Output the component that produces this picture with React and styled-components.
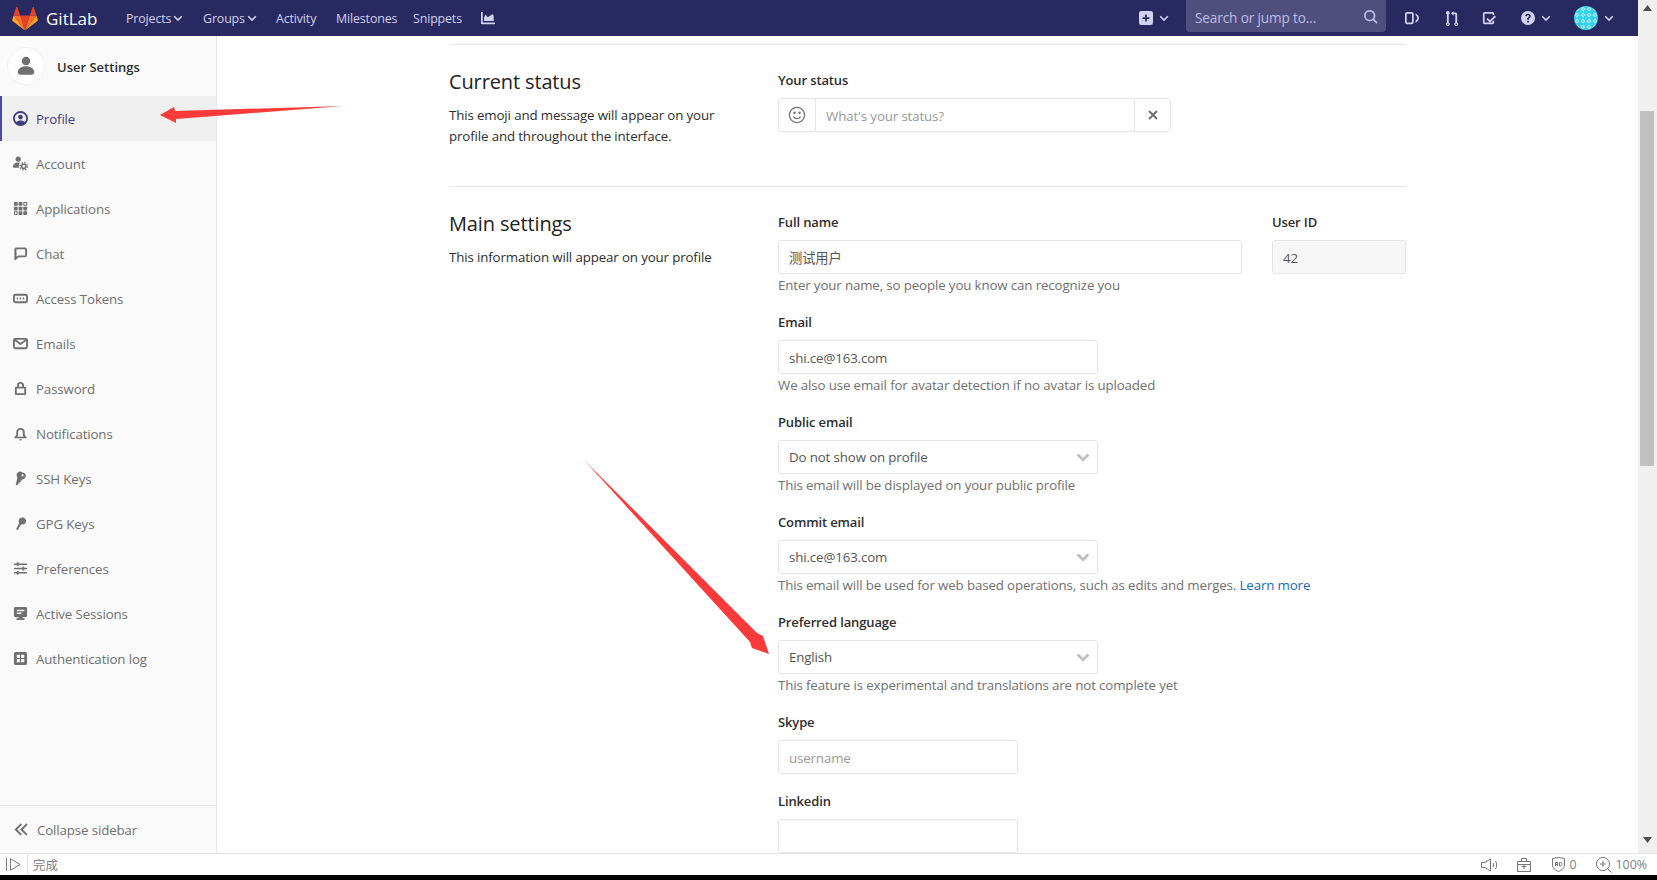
import React from "react";
import styled, {createGlobalStyle} from "styled-components";

const GlobalStyle = createGlobalStyle`
  html, body {
    margin: 0;
    height: 100%;
    overflow: hidden;
    background: #fff;
  }
  * { box-sizing: border-box; }
  body {
    font-family: "Open Sans", "Noto Sans CJK SC", sans-serif;
    font-size: 13.3px;
    letter-spacing: -0.13px;
    color: #2e2e2e;
  }
`;

const Page = styled.div`
  position: relative;
  width: 1657px;
  height: 880px;
  display: flex;
  flex-direction: column;
  overflow: hidden;
`;

const Window = styled.div`
  flex: 1;
  min-height: 0;
  display: flex;
`;

const Column = styled.div`
  flex: 1;
  min-width: 0;
  display: flex;
  flex-direction: column;
`;

/* top navbar */
const Navbar = styled.header`
  height: 36px;
  flex: none;
  display: flex;
  align-items: center;
  background: #292961;
  padding-right: 24px;
`;

const Logo = styled.a`
  display: flex;
  align-items: center;
  gap: 8px;
  margin-left: 12px;
  width: 114px;
  color: #fff;
  font-size: 17px;
  letter-spacing: 0;
`;

const NavLink = styled.a`
  display: flex;
  align-items: center;
  gap: 2px;
  width: ${props => props.$w}px;
  flex: none;
  color: #d1d1f0;
  font-size: 12.4px;
  font-weight: 500;
`;

const NavRight = styled.div`
  margin-left: auto;
  display: flex;
  align-items: center;
`;

const NavIcon = styled.span`
  display: flex;
  align-items: center;
  gap: 6px;
  margin-left: ${props => props.$ml || 0}px;
  color: #d1d1f0;
`;

const SearchBox = styled.div`
  width: 200px;
  height: 32px;
  margin: -4px 0 0 17px;
  padding: 2px 8px 0 9px;
  display: flex;
  align-items: center;
  justify-content: space-between;
  background: #4f4f7e;
  border-radius: 0 0 4px 4px;
  color: #bcbce6;
  font-size: 13.6px;
`;

/* page body */
const Body = styled.div`
  flex: 1;
  min-height: 0;
  display: flex;
`;

const Sidebar = styled.aside`
  width: 217px;
  flex: none;
  display: flex;
  flex-direction: column;
  background: #fafafa;
  border-right: 1px solid #e5e5e5;
`;

const SidebarHead = styled.div`
  height: 60px;
  display: flex;
  align-items: center;
  gap: 12px;
  padding-left: 7px;
  font-weight: 600;
  font-size: 13px;
  letter-spacing: 0;
`;

const HeadTitle = styled.span`
  padding-top: 1px;
`;

const HeadAvatar = styled.div`
  width: 38px;
  height: 38px;
  border-radius: 50%;
  background: #fff;
  border: 1px solid #f0f0f0;
  display: flex;
  align-items: center;
  justify-content: center;
`;

const SideItem = styled.a`
  height: 45px;
  display: flex;
  align-items: center;
  gap: 8px;
  padding-left: ${props => props.$active ? 11 : 13}px;
  color: ${props => props.$active ? "#3d3d82" : "#707070"};
  background: ${props => props.$active ? "#efefef" : "transparent"};
  border-left: ${props => props.$active ? "2px solid #4b4ba3" : "none"};
  font-weight: ${props => props.$active ? 500 : 400};
`;

const Collapse = styled.div`
  margin-top: auto;
  height: 48px;
  display: flex;
  align-items: center;
  gap: 8px;
  padding-left: 14px;
  border-top: 1px solid #e5e5e5;
  color: #707070;
`;

const Main = styled.main`
  flex: 1;
  min-width: 0;
  overflow: hidden;
  padding: 8px 0 0 232px;
`;

const Scrollbar = styled.div`
  width: 19px;
  flex: none;
  display: flex;
  flex-direction: column;
  align-items: center;
  padding-right: 1px;
  background: #f0f0f0;
`;

const Thumb = styled.div`
  width: 14px;
  height: 355px;
  margin-top: 100px;
  background: #c1c1c1;
`;

const ScrollArrow = styled.svg`
  width: 9px;
  height: 6px;
  flex: none;
  margin-top: ${props => props.$top || 0}px;
`;

const Rule = styled.hr`
  margin: 0;
  width: 957px;
  border: 0;
  border-top: 1px solid #e5e5e5;
`;

const Section = styled.section`
  display: grid;
  grid-template-columns: 329px 628px;
  width: 957px;
  padding-top: ${props => props.$pt}px;
  height: ${props => props.$h ? `${props.$h}px` : "auto"};
`;

const SectionInfo = styled.div`
  line-height: 21px;
`;

const SectionTitle = styled.h4`
  margin: -1px 0 10px;
  font-size: 20px;
  font-weight: 500;
  line-height: 26px;
  color: #222;
`;

const Field = styled.div`
  margin-bottom: 17px;
`;

const Label = styled.label`
  display: block;
  height: 20px;
  margin-bottom: 8px;
  line-height: 20px;
  font-weight: 600;
  font-size: 13px;
  color: #2e2e2e;
`;

const Input = styled.input`
  display: block;
  width: ${props => props.$w}px;
  height: 34px;
  padding: ${props => props.$cjk ? "0 10px" : "2px 10px 0"};
  border: 1px solid #e5e5e5;
  border-radius: 3px;
  background: ${props => props.$off ? "#f7f7f7" : "#fff"};
  font: inherit;
  letter-spacing: inherit;
  color: #555;
  outline: none;
  &::placeholder { color: #999; opacity: 1; }
`;

const SelectBox = styled.div`
  width: 320px;
  height: 34px;
  padding: 0 7px 0 10px;
  display: flex;
  align-items: center;
  justify-content: space-between;
  border: 1px solid #e5e5e5;
  border-radius: 3px;
  color: #555;
`;

const Help = styled.p`
  margin: 1px 0 0;
  line-height: 20px;
  color: #707070;
`;

const HelpLink = styled.a`
  color: #1b69b6;
`;

const NameRow = styled.div`
  display: flex;
  justify-content: space-between;
`;

const StatusGroup = styled.div`
  width: 393px;
  height: 34px;
  display: flex;
  border: 1px solid #e5e5e5;
  border-radius: 3px;
`;

const StatusAddon = styled.div`
  width: ${props => props.$w}px;
  flex: none;
  display: flex;
  align-items: center;
  justify-content: center;
  color: #707070;
  ${props => props.$left ? "border-right" : "border-left"}: 1px solid #e5e5e5;
`;

const StatusInput = styled.input`
  flex: 1;
  min-width: 0;
  border: 0;
  padding: 2px 10px 0;
  font: inherit;
  letter-spacing: inherit;
  outline: none;
  &::placeholder { color: #999; opacity: 1; }
`;

/* browser status strip */
const StatusBar = styled.footer`
  height: 22px;
  flex: none;
  display: flex;
  align-items: center;
  background: #fff;
  border-top: 1px solid #e3e3e3;
  color: #808080;
  font-size: 12.4px;
  letter-spacing: 0;
`;

const PlayBox = styled.div`
  width: 28px;
  height: 100%;
  display: flex;
  align-items: center;
  justify-content: center;
  border-right: 1px solid #e3e3e3;
  margin-right: 5px;
`;

const StatusRight = styled.div`
  margin-left: auto;
  padding-right: 10px;
  display: flex;
  align-items: center;
`;

const StatusItem = styled.span`
  display: flex;
  align-items: center;
  gap: 4px;
  margin-left: ${props => props.$ml}px;
`;

const BlackStrip = styled.div`
  height: 5px;
  flex: none;
  background: #000;
`;

/* the red marks drawn on top of the screenshot */
const Overlay = styled.svg`
  position: absolute;
  left: 0;
  top: 0;
  pointer-events: none;
`;

const Ico = ({children, s = 16, c = "currentColor"}) => (
  <svg width={s} height={s} viewBox="0 0 16 16" fill={c} style={{flex: "none"}}>{children}</svg>
);

const Chevron = ({s = 10, c = "currentColor", w = 1.6}) => (
  <svg width={s} height={s} viewBox="0 0 10 10" fill="none" stroke={c} strokeWidth={w} style={{flex: "none"}}>
    <path d="M1.2 3.2 5 7 8.8 3.2"/>
  </svg>
);

const GitlabLogo = () => (
  <svg width="26" height="25" viewBox="0 0 26 25" style={{flex: "none"}}>
    <path d="M13 24.5 17.8 9.6H8.2z" fill="#e24329"/>
    <path d="M13 24.5 8.2 9.6H1.5z" fill="#fc6d26"/>
    <path d="M1.5 9.6.2 13.9c-.1.4 0 .8.4 1.1L13 24.5z" fill="#fca326"/>
    <path d="M1.5 9.6h6.7L5.3 1c-.1-.5-.8-.5-1 0z" fill="#e24329"/>
    <path d="M13 24.5 17.8 9.6h6.7z" fill="#fc6d26"/>
    <path d="M24.500 9.600l1.300 4.300c.1.4 0 .8-.4 1.100L13 24.500z" fill="#fca326"/>
    <path d="M24.500 9.600h-6.700L20.700 1c.1-.5.8-.5 1 0z" fill="#e24329"/>
  </svg>
);

const Avatar = () => (
  <svg width="24" height="24" viewBox="0 0 24 24" style={{flex: "none"}}>
    <defs>
      <pattern id="ident" width="6" height="6" patternUnits="userSpaceOnUse">
        <rect width="6" height="6" fill="#2fd3ef"/>
        <rect x="1.200" y="1.200" width="3.600" height="3.600" fill="#b5eef8" transform="rotate(45 3 3)"/>
        <rect x="2.300" y="2.300" width="1.400" height="1.400" fill="#2fd3ef"/>
      </pattern>
    </defs>
    <circle cx="12" cy="12" r="12" fill="url(#ident)"/>
  </svg>
);

const icons = {
  profile: <><path fillRule="evenodd" d="M8 0a8 8 0 1 1 0 16A8 8 0 0 1 8 0zm0 2a6 6 0 0 0-4.600 9.850C4.400 10.700 6.100 10 8 10s3.600.7 4.600 1.850A6 6 0 0 0 8 2z"/><circle cx="8" cy="6.500" r="2.500"/></>,
  account: <>
    <circle cx="5.500" cy="3.200" r="2.800"/>
    <path d="M0 11.500C0 8.900 2.300 7 5.500 7c.6 0 1.200.1 1.700.2C6.300 8.400 6 10 6.400 12.500H1a1 1 0 0 1-1-1z"/>
    <circle cx="11.500" cy="11" r="2.300" fill="none" stroke="currentColor" strokeWidth="1.600"/>
    <circle cx="11.500" cy="11" r="3.900" fill="none" stroke="currentColor" strokeWidth="1.300" strokeDasharray="1.500 1.560"/>
  </>,
  apps: <><rect x="1" y="1" width="4" height="4" rx=".6"/><rect x="6" y="1" width="4" height="4" rx=".6"/><path fillRule="evenodd" d="M11.600 1h3a.6.6 0 0 1 .6.6v2.800a.6.6 0 0 1-.6.6h-3a.6.6 0 0 1-.6-.6V1.600a.6.6 0 0 1 .6-.6zm.5 1.100v1.800h2V2.100z"/><rect x="1" y="6" width="4" height="4" rx=".6"/><rect x="6" y="6" width="4" height="4" rx=".6"/><rect x="11" y="6" width="4" height="4" rx=".6"/><path fillRule="evenodd" d="M1.600 11h2.800a.6.6 0 0 1 .6.6v2.800a.6.6 0 0 1-.6.6H1.600a.6.6 0 0 1-.6-.6v-2.800a.6.6 0 0 1 .6-.6zm.5 1.100v1.800h1.800v-1.800z"/><rect x="6" y="11" width="4" height="4" rx=".6"/><rect x="11" y="11" width="4" height="4" rx=".6"/></>,
  chat: <path fillRule="evenodd" d="M3.500 1.500h9a2.500 2.500 0 0 1 2.500 2.500v5.500a2.500 2.500 0 0 1-2.500 2.500H6.200L2.800 15c-.6.5-1.300.1-1.300-.6V3.500a2 2 0 0 1 2-2zm.2 2v7.900l1.700-1.400h7.100a.5.5 0 0 0 .5-.5V4a.5.5 0 0 0-.5-.5z"/>,
  token: <path fillRule="evenodd" d="M2.500 3h11A2.500 2.500 0 0 1 16 5.500v5a2.500 2.500 0 0 1-2.500 2.500h-11A2.500 2.500 0 0 1 0 10.500v-5A2.500 2.500 0 0 1 2.500 3zm0 2a.5.5 0 0 0-.5.5v5c0 .3.2.5.5.5h11c.3 0 .5-.2.5-.5v-5a.5.5 0 0 0-.5-.5zM4 7h1.500v2H4zm3.200 0h1.600v2H7.200zm3.300 0H12v2h-1.500z"/>,
  mail: <path fillRule="evenodd" d="M2.500 2h11A2.500 2.500 0 0 1 16 4.500v7a2.500 2.500 0 0 1-2.500 2.500h-11A2.500 2.500 0 0 1 0 11.500v-7A2.500 2.500 0 0 1 2.500 2zM2 5.300v6.200c0 .3.2.5.5.5h11c.3 0 .5-.2.5-.5V5.300L8.600 9.300a1 1 0 0 1-1.200 0zM3.300 4 8 7.300 12.700 4z"/>,
  lock: <path fillRule="evenodd" d="M8 1a3.800 3.800 0 0 1 3.800 3.800V6h.7A1.500 1.500 0 0 1 14 7.500v6a1.500 1.500 0 0 1-1.500 1.500h-9A1.500 1.500 0 0 1 2 13.500v-6A1.500 1.500 0 0 1 3.500 6h.7V4.800A3.800 3.800 0 0 1 8 1zm0 2a1.800 1.800 0 0 0-1.800 1.800V6h3.600V4.800A1.800 1.800 0 0 0 8 3zM4 8v5h8V8z"/>,
  bell: <path fillRule="evenodd" d="M8 2a4.500 4.500 0 0 1 4.500 4.500v3l2 2.500c.4.500 0 1-.5 1H2c-.5 0-.9-.5-.5-1l2-2.500v-3A4.500 4.500 0 0 1 8 2zm0 2a2.500 2.500 0 0 0-2.500 2.500v3.700L4.500 11.500h7l-1-1.300V6.500A2.500 2.500 0 0 0 8 4zM6.500 14h3a1.500 1.500 0 0 1-3 0z"/>,
  sshKey: <path fillRule="evenodd" d="M10 1.500a3.700 3.700 0 0 1 1 7.250L9.500 9v1.200H8.200v1.500H7v1.500H5.600L5 15H3l1.700-8.400A3.700 3.700 0 0 1 10 1.500zm.2 2a1.200 1.200 0 1 0 0 2.400 1.200 1.200 0 0 0 0-2.400z"/>,
  gpgKey: <path d="M10.200 1.500a3.800 3.800 0 1 1-1.500 7.300L5.400 14.500a.8.8 0 0 1-1 .3l-.6-.3a.8.8 0 0 1-.3-1L6.700 7.500a3.800 3.800 0 0 1 3.500-6z"/>,
  prefs: <><rect x="1" y="2.600" width="14" height="1.600" rx=".6"/><rect x="4" y="1.400" width="2" height="4" rx=".5"/><rect x="1" y="7.200" width="14" height="1.600" rx=".6"/><rect x="10" y="6" width="2" height="4" rx=".5"/><rect x="1" y="11.800" width="14" height="1.600" rx=".6"/><rect x="4" y="10.600" width="2" height="4" rx=".5"/></>,
  monitor: <path fillRule="evenodd" d="M2.500 1h11A1.500 1.500 0 0 1 15 2.500v8a1.500 1.500 0 0 1-1.500 1.500H10v1h1.500a1 1 0 0 1 0 2h-7a1 1 0 0 1 0-2H6v-1H2.500A1.500 1.500 0 0 1 1 10.500v-8A1.500 1.500 0 0 1 2.500 1zM4 4v1.500h8V4zm0 3v1.500h5V7z"/>,
  log: <path fillRule="evenodd" d="M3 1h10a2 2 0 0 1 2 2v10a2 2 0 0 1-2 2H3a2 2 0 0 1-2-2V3a2 2 0 0 1 2-2zm1 3v3.400h3.400V4zm4.600 0v3.400H12V4zM4 8.600V12h3.400V8.600zm4.600 0V12H12V8.600z"/>,
};

const sideItems = [
  ["Profile", "profile"], ["Account", "account"], ["Applications", "apps"], ["Chat", "chat"],
  ["Access Tokens", "token"], ["Emails", "mail"], ["Password", "lock"], ["Notifications", "bell"],
  ["SSH Keys", "sshKey"], ["GPG Keys", "gpgKey"], ["Preferences", "prefs"],
  ["Active Sessions", "monitor"], ["Authentication log", "log"],
];

function SelectField({label, value, help}) {
  return (
    <Field>
      <Label>{label}</Label>
      <SelectBox>
        {value}
        <Chevron s={14} c="#c0c0c0" w={2}/>
      </SelectBox>
      <Help>{help}</Help>
    </Field>
  );
}

function TopBar() {
  return (
    <Navbar>
      <Logo><GitlabLogo/>GitLab</Logo>
      <NavLink $w={77}>Projects <Chevron/></NavLink>
      <NavLink $w={73}>Groups <Chevron/></NavLink>
      <NavLink $w={60}>Activity</NavLink>
      <NavLink $w={77}>Milestones</NavLink>
      <NavLink $w={68}>Snippets</NavLink>
      <NavIcon>
        <Ico s={14}><path d="M0 1h2v12h14v2H1a1 1 0 0 1-1-1zM3.500 11V7l2-3 2 3 3-1.500L13 3.500 14.500 5.500V11.500H3.500z"/></Ico>
      </NavIcon>
      <NavRight>
        <NavIcon>
          <Ico s={14}><path fillRule="evenodd" d="M2.500 0h11A2.500 2.500 0 0 1 16 2.500v11a2.500 2.500 0 0 1-2.500 2.500h-11A2.500 2.500 0 0 1 0 13.500v-11A2.500 2.500 0 0 1 2.500 0zM7 4v3H4v2h3v3h2V9h3V7H9V4z"/></Ico>
          <Chevron/>
        </NavIcon>
        <SearchBox>
          Search or jump to...
          <Ico s={14}><path fillRule="evenodd" d="M6.500 0a6.500 6.500 0 0 1 5.200 10.400l3.900 3.800-1.400 1.400-3.900-3.800A6.500 6.500 0 1 1 6.500 0zm0 2a4.500 4.500 0 1 0 0 9 4.500 4.500 0 0 0 0-9z"/></Ico>
        </SearchBox>
        <NavIcon $ml={19}>
          <Ico s={14}><path fillRule="evenodd" d="M2.500 1h5A2.500 2.500 0 0 1 10 3.500v9A2.500 2.500 0 0 1 7.500 15h-5A2.500 2.500 0 0 1 0 12.500v-9A2.500 2.500 0 0 1 2.500 1zm0 2a.5.5 0 0 0-.5.5v9c0 .3.2.5.5.5h5c.3 0 .5-.2.5-.5v-9a.5.5 0 0 0-.5-.5zM12 2.500c2.600 1.800 4 3.500 4 5.500s-1.400 3.700-4 5.500v-2.400c1.300-1 2-2 2-3.100s-.7-2.100-2-3.100z"/></Ico>
        </NavIcon>
        <NavIcon $ml={26}>
          <Ico s={15}><path fillRule="evenodd" d="M3 0a2 2 0 0 1 1 3.700v8.600A2 2 0 1 1 2 12.300V3.700A2 2 0 0 1 3 0zm0 13.300a.7.7 0 1 0 0 1.400.7.7 0 0 0 0-1.400zM9 0v1.500h2a2 2 0 0 1 2 2v8.800a2 2 0 1 1-2 0V3.500H9V5L6.500 2.500zm3 13.300a.7.7 0 1 0 0 1.400.7.7 0 0 0 0-1.400z"/></Ico>
        </NavIcon>
        <NavIcon $ml={22}>
          <Ico s={14}><path fillRule="evenodd" d="M3 1h9a2 2 0 0 1 2 2v1.500h-2V3H3v10h9v-2h2v2a2 2 0 0 1-2 2H3a2 2 0 0 1-2-2V3a2 2 0 0 1 2-2zm11.500 4L16 6.500l-7 7-4-4L6.500 8 9 10.500z"/></Ico>
        </NavIcon>
        <NavIcon $ml={25}>
          <Ico s={14}><path fillRule="evenodd" d="M8 0a8 8 0 1 1 0 16A8 8 0 0 1 8 0zM7 11v2h2v-2zM8 3C6.200 3 5 4 4.800 5.700l2 .3c.1-.8.5-1.100 1.200-1.100s1.100.4 1.100 1c0 .5-.3.8-.9 1.300-.8.6-1.200 1.200-1.200 2.300v.5h2v-.4c0-.5.2-.8.8-1.300C10.600 7.700 11.200 7 11.200 5.800 11.200 4.100 9.900 3 8 3z"/></Ico>
          <Chevron/>
        </NavIcon>
        <NavIcon $ml={23}>
          <Avatar/>
          <Chevron/>
        </NavIcon>
      </NavRight>
    </Navbar>
  );
}

export default function App() {
  return (
    <Page>
      <GlobalStyle/>
      <Window>
        <Column>
          <TopBar/>
          <Body>
            <Sidebar>
              <SidebarHead>
                <HeadAvatar>
                  <Ico s={20} c="#707070"><circle cx="8" cy="4" r="3.400"/><path d="M1.500 13c0-3 2.800-4.800 6.500-4.800s6.500 1.800 6.500 4.800c0 1-.8 2-2 2h-9c-1.200 0-2-1-2-2z"/></Ico>
                </HeadAvatar>
                <HeadTitle>User Settings</HeadTitle>
              </SidebarHead>
              {sideItems.map(([text, icon], i) => (
                <SideItem key={text} $active={i === 0}>
                  <Ico s={15} c={i === 0 ? "#3d3d82" : "#707070"}>{icons[icon]}</Ico>
                  {text}
                </SideItem>
              ))}
              <Collapse>
                <Ico s={15} c="#707070">
                  <path d="M7 1.500 8.500 3 3.500 8l5 5L7 14.500.5 8zM13 1.500 14.500 3l-5 5 5 5-1.500 1.500L6.500 8z"/>
                </Ico>
                Collapse sidebar
              </Collapse>
            </Sidebar>
            <Main>
              <Rule/>
              <Section $pt={25} $h={141}>
                <SectionInfo>
                  <SectionTitle>Current status</SectionTitle>
                  This emoji and message will appear on your<br/>profile and throughout the interface.
                </SectionInfo>
                <div>
                  <Label>Your status</Label>
                  <StatusGroup>
                    <StatusAddon $w={37} $left>
                      <svg width="18" height="18" viewBox="0 0 18 18" fill="none" stroke="currentColor" strokeWidth="1.300">
                        <circle cx="9" cy="9" r="7.600"/>
                        <path d="M5.500 10.500c.8 1.500 2 2.200 3.500 2.200s2.700-.7 3.500-2.200"/>
                        <circle cx="6.500" cy="6.800" r=".6" fill="currentColor"/>
                        <circle cx="11.500" cy="6.800" r=".6" fill="currentColor"/>
                      </svg>
                    </StatusAddon>
                    <StatusInput placeholder="What's your status?"/>
                    <StatusAddon $w={36}>
                      <svg width="10" height="10" viewBox="0 0 10 10" stroke="currentColor" strokeWidth="2">
                        <path d="M1 1l8 8M9 1 1 9"/>
                      </svg>
                    </StatusAddon>
                  </StatusGroup>
                </div>
              </Section>
              <Rule/>
              <Section $pt={25}>
                <SectionInfo>
                  <SectionTitle>Main settings</SectionTitle>
                  This information will appear on your profile
                </SectionInfo>
                <div>
                  <Field>
                    <NameRow>
                      <div>
                        <Label>Full name</Label>
                        <Input $w={464} $cjk readOnly value="测试用户"/>
                        <Help>Enter your name, so people you know can recognize you</Help>
                      </div>
                      <div>
                        <Label>User ID</Label>
                        <Input $w={134} $off readOnly value="42"/>
                      </div>
                    </NameRow>
                  </Field>
                  <Field>
                    <Label>Email</Label>
                    <Input $w={320} readOnly value="shi.ce@163.com"/>
                    <Help>We also use email for avatar detection if no avatar is uploaded</Help>
                  </Field>
                  <SelectField label="Public email" value="Do not show on profile"
                    help="This email will be displayed on your public profile"/>
                  <SelectField label="Commit email" value="shi.ce@163.com"
                    help={<>This email will be used for web based operations, such as edits and merges. <HelpLink>Learn more</HelpLink></>}/>
                  <SelectField label="Preferred language" value="English"
                    help="This feature is experimental and translations are not complete yet"/>
                  <Field>
                    <Label>Skype</Label>
                    <Input $w={240} readOnly placeholder="username"/>
                  </Field>
                  <Field>
                    <Label>Linkedin</Label>
                    <Input $w={240} readOnly/>
                  </Field>
                </div>
              </Section>
            </Main>
          </Body>
        </Column>
        <Scrollbar>
          <ScrollArrow $top={5} viewBox="0 0 9 6"><path d="M4.500 0 9 6H0z" fill="#505050"/></ScrollArrow>
          <Thumb/>
          <ScrollArrow $top={371} viewBox="0 0 9 6"><path d="M4.500 6 9 0H0z" fill="#505050"/></ScrollArrow>
        </Scrollbar>
      </Window>
      <StatusBar>
        <PlayBox>
          <svg width="15" height="13" viewBox="0 0 15 13" fill="none" stroke="#777">
            <path d="M.5 0v13M4.500.8l9.500 5.700-9.500 5.700z"/>
          </svg>
        </PlayBox>
        完成
        <StatusRight>
          <StatusItem>
            <svg width="17" height="14" viewBox="0 0 17 14" fill="none" stroke="#777">
              <path d="M.5 4.500h3.500L9.500 1v12L4 9.500H.5zM12 5c.8 1.200.8 2.800 0 4M14.500 3c1.500 2.400 1.500 5.600 0 8"/>
            </svg>
          </StatusItem>
          <StatusItem $ml={19}>
            <svg width="14" height="14" viewBox="0 0 14 14" fill="none" stroke="#777">
              <path d="M.5 3.500h13v10H.5zM4.500 3.500v-3h5v3M7 6v5M4.500 8.500h5M.5 6.500h13"/>
            </svg>
          </StatusItem>
          <StatusItem $ml={21}>
            <svg width="13" height="15" viewBox="0 0 13 15" fill="none" stroke="#777">
              <path d="M.5 1.500 6.500.5l6 1V8c0 3-2.500 5-6 6.500C3 13 .5 11 .5 8z"/>
              <path d="M3.500 9V5.500h2V9M3.500 7.500h2M7.500 5.500h1c1 0 1.500.7 1.500 1.700S9.500 9 8.500 9h-1z"/>
            </svg>
            0
          </StatusItem>
          <StatusItem $ml={19}>
            <svg width="16" height="16" viewBox="0 0 16 16" fill="none" stroke="#777">
              <circle cx="7" cy="7" r="6.500"/>
              <path d="M7 4v6M4 7h6M11.500 11.500 15.500 15.500"/>
            </svg>
            100%
          </StatusItem>
        </StatusRight>
      </StatusBar>
      <BlackStrip/>
      <Overlay width="1657" height="880" viewBox="0 0 1657 880">
        <polygon fill="#fb3a3a" points="160,115 174,107 175,111 343,106 176,119 176,123"/>
        <polygon fill="#fb3a3a" points="584,460 757,633 763,636 769,654 752,648 750,642"/>
      </Overlay>
    </Page>
  );
}
